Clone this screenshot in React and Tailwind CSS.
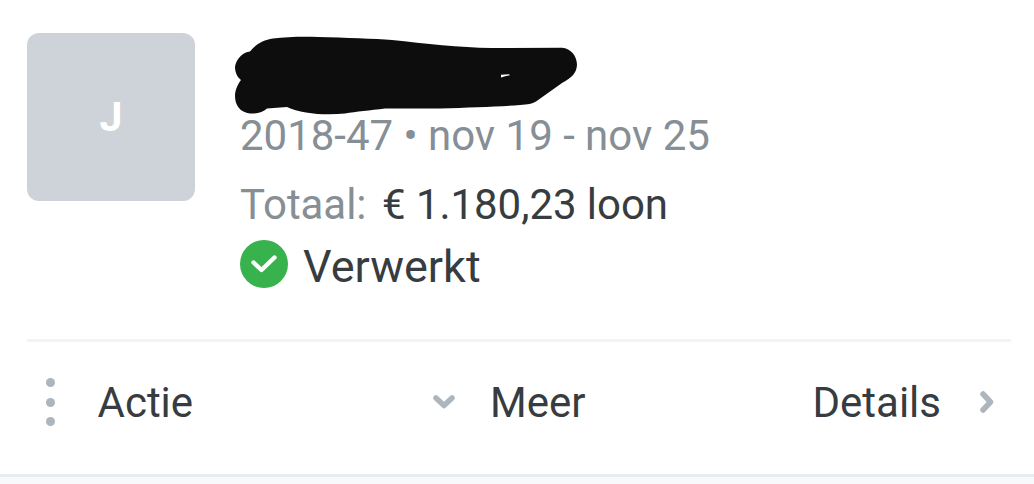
const dots = [0, 1, 2];

function Avatar({ letter }) {
  return (
    <div className="flex size-[168px] shrink-0 items-center justify-center rounded-xl bg-[#ced3da]">
      <span className="pt-0.5 text-[41px] font-bold text-white">{letter}</span>
    </div>
  );
}

// Marker strokes that cover the employee name
function HiddenName() {
  return (
    <svg className="-ml-2 h-[84px] w-[350px]" viewBox="232 33 350 84" fill="none">
      <path
        fill="#0d0d0d"
        d="M250 51.5C256 44 263 40 273 38.5C286 37 301 36.500 318 37C345 37.800 375 38.700 392 40C425 43.500 460 47.500 491 48L562 47.700C571 48.500 577 56 577 65C576.500 73 572 77.500 562 83L536 101.500C532 104 528 104.500 520 105C500 106.500 470 107.500 440 108.500L385 108.500C370 110.500 356 111.500 345 113.500C326 115.500 301 114 287 107L267 108.500C263 112 257 114 250 113.500C240 112.500 235 105 235 96C235 90 238 84 241 80C237 77 235 72 235 67C236 59 243 52 250 51.500Z"
      />
      <path fill="#fff" d="M501 77.500V74.800L509 74.300L510 75.200L506 76Z" />
    </svg>
  );
}

function CheckBadge() {
  return (
    <svg className="size-12 shrink-0" viewBox="0 0 48 48" fill="none">
      <circle cx="24" cy="24" r="24" fill="#37b24d" />
      <path d="M13.500 22.500L21.500 30L34.500 17.500" stroke="#fff" strokeWidth="4.400" strokeLinecap="round" strokeLinejoin="round" />
    </svg>
  );
}

function Chevron({ className }) {
  return (
    <svg className={className} viewBox="0 0 22 14" fill="none">
      <path d="M3 3L11 10.500L19 3" stroke="#adb5bd" strokeWidth="5.500" strokeLinecap="round" strokeLinejoin="round" />
    </svg>
  );
}

export default function App() {
  return (
    <div className="h-[484px] w-[1034px] overflow-hidden bg-[#f8f9fb] font-['Roboto',sans-serif] text-[42px] text-[#363c40]">
      <div className="h-[477px] border-b-3 border-[#e9ecef] bg-white pt-[33px] pr-[23px] pl-[27px]">
        <div className="flex h-[306px] gap-[45px]">
          <Avatar letter="J" />
          <div className="flex flex-col whitespace-nowrap">
            <div className="h-[78px]">
              <HiddenName />
            </div>
            <p className="leading-[49px] tracking-[-0.02px] text-[#868e96]">2018-47 • nov 19 - nov 25</p>
            <p className="mt-5 flex leading-[49px] tracking-[-0.05px]">
              <span className="w-[142px] text-[#868e96]">Totaal:</span>
              <span>€ 1.180,23 loon</span>
            </p>
            <div className="mt-[11px] flex h-12 items-start gap-[15px]">
              <CheckBadge />
              <span className="text-[45px] leading-[53px]">Verwerkt</span>
            </div>
          </div>
        </div>
        <div className="flex h-[124px] items-center border-t-3 border-[#f1f3f5]">
          <div className="mb-px ml-[19px] flex flex-col gap-[10.500px]">
            {dots.map((d) => (
              <span key={d} className="size-[9px] rounded-full bg-[#adb5bd]" />
            ))}
          </div>
          <span className="ml-[42.500px] w-[335.500px]">Actie</span>
          <Chevron className="mb-px h-[14px] w-[22px]" />
          <span className="ml-[35px]">Meer</span>
          <span className="ml-auto">Details</span>
          <Chevron className="mr-[13px] mb-[2px] ml-[35px] h-[14px] w-[22px] -rotate-90" />
        </div>
      </div>
    </div>
  );
}
